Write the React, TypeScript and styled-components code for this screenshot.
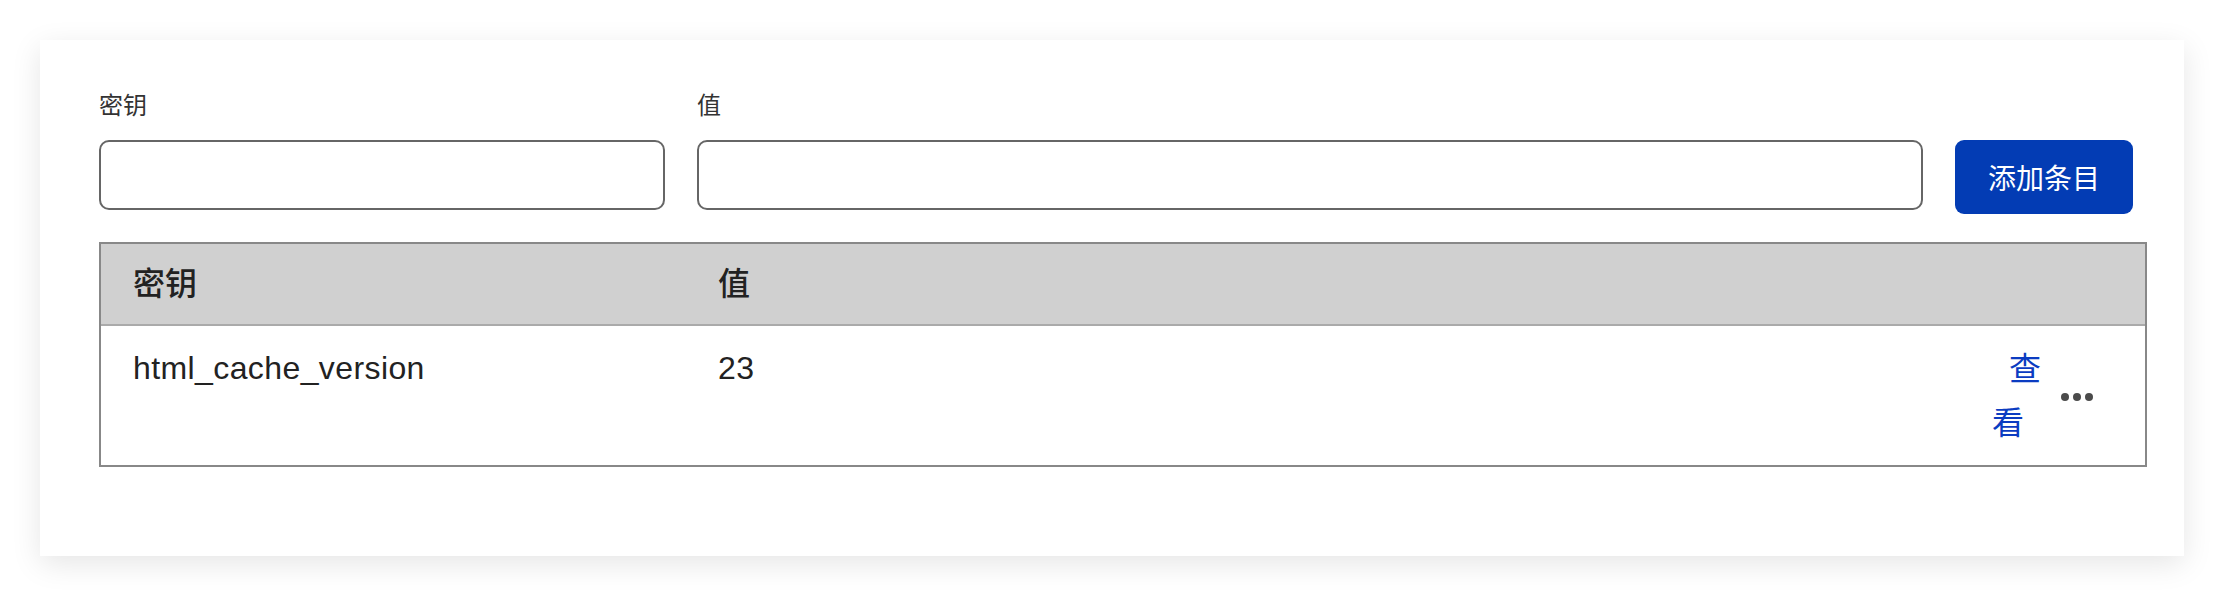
import React from "react";
import styled, { createGlobalStyle } from "styled-components";

const GlobalStyle = createGlobalStyle`
  html, body {
    margin: 0;
    padding: 0;
    background: #ffffff;
    font-family: "Liberation Sans", "Noto Sans CJK SC", sans-serif;
    color: #222222;
  }
  * { box-sizing: border-box; }
`;

const Page = styled.div`
  padding: 40px;
`;

const Card = styled.section`
  width: 2144px;
  background: #ffffff;
  padding: 54px 51px 89px 59px;
  box-shadow: 0 8px 28px rgba(0, 0, 0, 0.1);
`;

const Form = styled.form`
  display: grid;
  grid-template-columns: 566px 1226px 178px;
  grid-template-rows: 24px auto;
  column-gap: 32px;
  row-gap: 22px;
  align-items: start;
`;

const Label = styled.label`
  font-size: 24px;
  line-height: 24px;
  color: #333333;
`;

const Input = styled.input`
  grid-row: 2;
  width: 100%;
  height: 70px;
  border: 2px solid #666666;
  border-radius: 10px;
  background: #ffffff;
  font: inherit;
  font-size: 28px;
  padding: 0 16px;
  outline: none;
`;

const AddButton = styled.button`
  grid-row: 2;
  grid-column: 3;
  height: 74px;
  border: none;
  border-radius: 9px;
  background: #033cb4;
  color: #ffffff;
  font-family: "Liberation Sans", "Noto Sans CJK SC", sans-serif;
  font-size: 28px;
  cursor: pointer;
`;

const Table = styled.table`
  margin-top: 28px;
  width: 2048px;
  table-layout: fixed;
  border-collapse: separate;
  border-spacing: 0;
  border: 2px solid #888888;
`;

const HeadCell = styled.th`
  background: #d0d0d0;
  border-bottom: 2px solid #aaaaaa;
  padding: 15px 32px;
  height: 82px;
  text-align: left;
  font-weight: 500;
  font-size: 32px;
  line-height: 50px;
  color: #222222;
`;

const Cell = styled.td<{ $middle?: boolean }>`
  padding: 15px 32px;
  height: 139px;
  vertical-align: ${(p) => (p.$middle ? "middle" : "top")};
  font-size: 32px;
  line-height: 54px;
  letter-spacing: ${(p) => (p.$middle ? "0" : "0.4px")};
  color: #222222;
`;

const Actions = styled.div`
  display: flex;
  align-items: center;
  gap: 20px;
`;

const ViewLink = styled.a`
  display: block;
  width: 49px;
  text-indent: 17px;
  color: #0b3cc1;
  text-decoration: none;
  font-size: 32px;
  line-height: 54px;
  cursor: pointer;
`;

const MoreButton = styled.button`
  display: flex;
  align-items: center;
  border: none;
  background: transparent;
  padding: 0;
  margin-top: 2px;
  cursor: pointer;
`;

export default function App() {
  return (
    <>
      <GlobalStyle />
      <Page>
        <Card>
          <Form onSubmit={(e) => e.preventDefault()}>
            <Label htmlFor="k">密钥</Label>
            <Label htmlFor="v">值</Label>
            <Input id="k" type="text" />
            <Input id="v" type="text" />
            <AddButton type="submit">添加条目</AddButton>
          </Form>
          <Table>
            <colgroup>
              <col style={{ width: 585 }} />
              <col />
              <col style={{ width: 185 }} />
            </colgroup>
            <thead>
              <tr>
                <HeadCell>密钥</HeadCell>
                <HeadCell>值</HeadCell>
                <HeadCell />
              </tr>
            </thead>
            <tbody>
              <tr>
                <Cell>html_cache_version</Cell>
                <Cell>23</Cell>
                <Cell $middle>
                  <Actions>
                    <ViewLink>查看</ViewLink>
                    <MoreButton aria-label="更多">
                      <svg width="32" height="8" viewBox="0 0 32 8">
                        <circle cx="4" cy="4" r="4" fill="#4b4b4b" />
                        <circle cx="16" cy="4" r="4" fill="#4b4b4b" />
                        <circle cx="28" cy="4" r="4" fill="#4b4b4b" />
                      </svg>
                    </MoreButton>
                  </Actions>
                </Cell>
              </tr>
            </tbody>
          </Table>
        </Card>
      </Page>
    </>
  );
}
